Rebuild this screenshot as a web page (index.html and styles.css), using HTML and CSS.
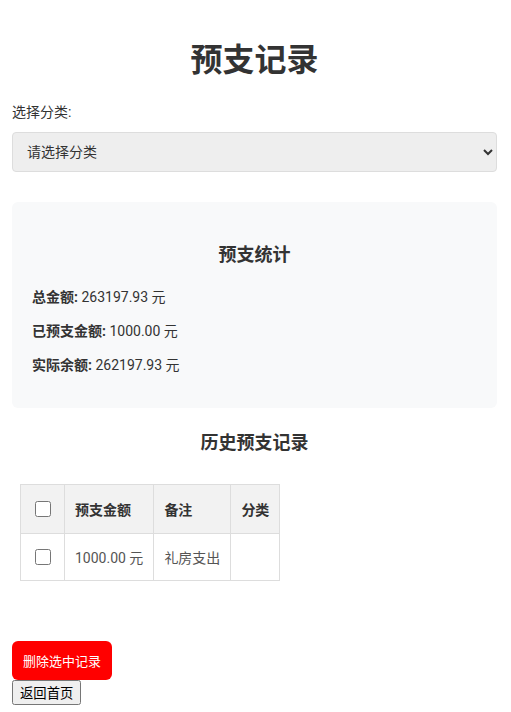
FILE: index.html
```html
<!DOCTYPE html>
<html lang="zh-CN">
<head>
  <meta charset="UTF-8">
  <meta name="viewport" content="width=device-width, initial-scale=1.0">
  <title>预支记录</title>
  <link rel="stylesheet" href="styles.css">
</head>
<body>
  <h1>预支记录</h1>

  <label class="field-label" for="category">选择分类:</label>
  <select id="category" class="category-select">
    <option value="">请选择分类</option>
  </select>

  <div class="stats-box">
    <h3>预支统计</h3>
    <p><b>总金额:</b> 263197.93 元</p>
    <p><b>已预支金额:</b> 1000.00 元</p>
    <p><b>实际余额:</b> 262197.93 元</p>
  </div>

  <h3 class="history-title">历史预支记录</h3>

  <table class="record-table">
    <thead>
      <tr>
        <th><input type="checkbox"></th>
        <th>预支金额</th>
        <th>备注</th>
        <th>分类</th>
      </tr>
    </thead>
    <tbody>
      <tr>
        <td><input type="checkbox"></td>
        <td>1000.00 元</td>
        <td>礼房支出</td>
        <td></td>
      </tr>
    </tbody>
  </table>

  <button class="delete-btn">删除选中记录</button>
  <br>
  <button class="back-btn">返回首页</button>
</body>
</html>
```

FILE: styles.css
```css
body {
  margin: 0;
  padding: 12px 14px 12px 12px;
  font-family: Roboto, "Noto Sans CJK SC", sans-serif;
  font-size: 14px;
  color: #333;
  background: #fff;
}

h1 {
  font-size: 32px;
  text-align: center;
  margin: 22px 0 21px;
}

.field-label {
  display: block;
  margin-bottom: 11px;
}

.category-select {
  display: block;
  width: 100%;
  height: 40px;
  padding: 0 10px;
  font-family: inherit;
  font-size: 14px;
  color: #333;
  background: #eee;
  border: 1px solid #ddd;
  border-radius: 4px;
}

.stats-box {
  background: #f8f9fa;
  border-radius: 6px;
  padding: 20px;
  margin-top: 30px;
}

.stats-box h3 {
  text-align: center;
  font-size: 18px;
  margin: 18px 0 20px;
}

.stats-box p {
  margin: 0 0 14px;
}

.stats-box p:last-child {
  margin-bottom: 14px;
}

.history-title {
  text-align: center;
  font-size: 18px;
  margin: 20px 0;
}

.record-table {
  border-collapse: collapse;
  margin: 30px 8px 60px;
}

.record-table th,
.record-table td {
  border: 1px solid #ddd;
  padding: 12px 10px;
  text-align: left;
  color: #555;
}

.record-table th {
  background: #f2f2f2;
  padding: 13px 10px;
  color: #333;
}

.record-table input[type="checkbox"] {
  width: 16px;
  height: 16px;
  vertical-align: middle;
}

.delete-btn {
  background: #f00;
  color: #fff;
  border: none;
  border-radius: 6px;
  padding: 10px 11px;
  font-family: inherit;
  font-size: 13px;
}

.back-btn {
  font-family: "Noto Sans CJK SC", sans-serif;
}
```
